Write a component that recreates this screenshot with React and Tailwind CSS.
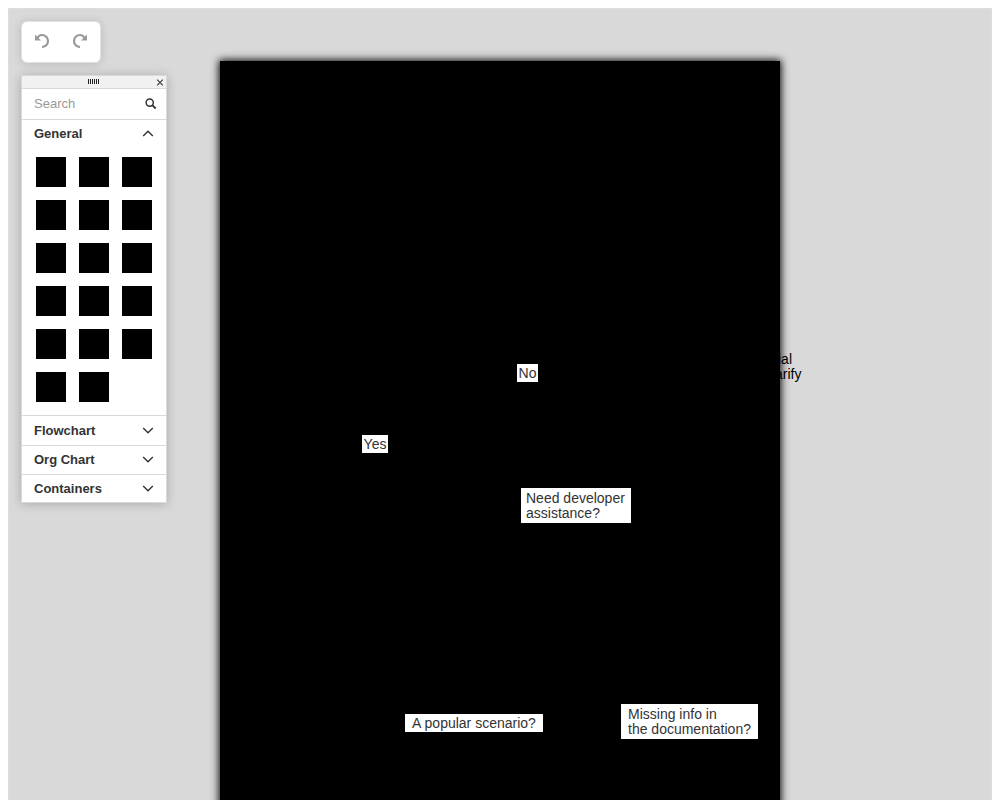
import React, { useState } from "react";

const shapes = [
  "Text", "Rectangle", "Rounded rectangle", "Ellipse", "Cross", "Triangle",
  "Diamond", "Pentagon", "Hexagon", "Octagon", "Heart", "Star",
  "Arrow up", "Arrow down", "Arrow left", "Arrow right", "Connector",
];

const labels = [
  { lines: ["No"], style: "left-[297px] top-[303px] h-[18px] w-[21px] justify-center" },
  { lines: ["Yes"], style: "left-[142px] top-[374px] h-[18px] w-[26px] justify-center" },
  { lines: ["Need developer", "assistance?"], style: "left-[301px] top-[427px] h-[35px] w-[110px] pl-[5px]" },
  { lines: ["A popular scenario?"], style: "left-[185px] top-[653px] h-[18px] w-[138px] justify-center" },
  { lines: ["Missing info in", "the documentation?"], style: "left-[401px] top-[643px] h-[35px] w-[137px] pl-[7px]" },
];

function Undo() {
  return (
    <svg className="h-4 w-4" viewBox="0 0 16 16" fill="none" aria-hidden="true">
      <path d="M3.6 4.8C4.7 3 6.2 2 8 2a6 6 0 0 1 0 12" stroke="#999" strokeWidth="2.2" />
      <path d="M1 1.6v6h6z" fill="#999" />
    </svg>
  );
}

function Chevron({ open }) {
  return (
    <svg className="h-3 w-3" viewBox="0 0 12 12" fill="none" stroke="#333" strokeWidth="1.4" aria-hidden="true">
      <path d={open ? "M1.2 8 6 3.2l4.8 4.8" : "M1.2 3 6 7.8l4.8-4.8"} />
    </svg>
  );
}

function SectionButton({ title, open, height, onClick }) {
  return (
    <button
      type="button"
      aria-expanded={open}
      onClick={onClick}
      className={`flex w-full items-center justify-between px-3 text-[13px] font-bold text-[#333] ${height}`}
    >
      <span>{title}</span>
      <Chevron open={open} />
    </button>
  );
}

function Toolbox() {
  const [open, setOpen] = useState("General");
  const toggle = (name) => setOpen(open === name ? "" : name);
  return (
    <aside className="w-[146px] divide-y divide-[#d9d9d9] border border-[#d9d9d9] bg-white shadow-[0_1px_10px_rgba(0,0,0,0.22)]">
      <div className="relative flex h-[13px] items-start justify-center bg-[#f1f1f1] pt-[3px] pr-[2px]">
        <svg className="h-[5px] w-[11px]" viewBox="0 0 11 5" fill="#222" shapeRendering="crispEdges" aria-hidden="true">
          <path d="M0 0h1v5H0zM2 0h1v5H2zM4 0h1v5H4zM6 0h1v5H6zM8 0h1v5H8zM10 0h1v5h-1z" />
        </svg>
        <button type="button" aria-label="Close toolbox" className="absolute top-[3px] right-[2px]">
          <svg className="h-[7px] w-[8px]" viewBox="0 0 8 7" stroke="#444" strokeWidth="1.3" aria-hidden="true">
            <path d="m1.2.6 5.6 5.8M6.8.6 1.2 6.4" />
          </svg>
        </button>
      </div>
      <div className="flex h-[31px] items-center pr-2 pl-3">
        <input
          type="text"
          aria-label="Search shapes"
          placeholder="Search"
          className="min-w-0 flex-1 bg-transparent text-[13px] text-[#333] outline-none placeholder:text-[#999]"
        />
        <button type="button" aria-label="Search">
          <svg className="h-[14px] w-[14px]" viewBox="0 0 14 14" fill="none" stroke="#333" aria-hidden="true">
            <circle cx="5.7" cy="5.6" r="3.6" strokeWidth="1.5" />
            <path d="m8.2 8.1 3.5 3.4" strokeWidth="1.8" />
          </svg>
        </button>
      </div>
      <section>
        <SectionButton title="General" open={open === "General"} height="h-7" onClick={() => toggle("General")} />
        {open === "General" && (
          <div className="grid grid-cols-[repeat(3,30px)] gap-[13px] px-[14px] pt-[9px] pb-[13px]">
            {shapes.map((shape) => (
              <button key={shape} type="button" aria-label={shape} className="h-[30px] bg-black" />
            ))}
          </div>
        )}
      </section>
      <section>
        <SectionButton title="Flowchart" open={open === "Flowchart"} height="h-[29px]" onClick={() => toggle("Flowchart")} />
      </section>
      <section>
        <SectionButton title="Org Chart" open={open === "Org Chart"} height="h-7" onClick={() => toggle("Org Chart")} />
      </section>
      <section>
        <SectionButton title="Containers" open={open === "Containers"} height="h-[27px]" onClick={() => toggle("Containers")} />
      </section>
    </aside>
  );
}

export default function App() {
  return (
    <div className="flex h-screen flex-col bg-white px-2 pt-2 font-['Liberation_Sans',Arial,sans-serif]">
      <main className="relative min-h-0 flex-1 overflow-hidden border-x border-t border-[#dddddd] bg-[#d9d9d9] pt-[52px]">
        <div className="relative mx-auto h-[1000px] w-[560px] bg-black text-sm leading-[15px] text-black shadow-[0_0_8px_1px_#000]">
          {labels.map(({ lines, style }) => (
            <div key={lines[0]} className={`absolute flex items-center bg-white whitespace-nowrap text-[#333] ${style}`}>
              <p>
                {lines.map((line) => (
                  <span key={line} className="block">{line}</span>
                ))}
              </p>
            </div>
          ))}
          <p className="absolute top-[291px] left-[558px]">ial</p>
          <p className="absolute top-[306px] left-[555px]">arify</p>
        </div>
        <div className="absolute top-3 left-3 flex flex-col items-start gap-3">
          <div className="flex h-[42px] w-20 items-center justify-center gap-[22px] rounded-md border border-[#e2e2e2] bg-white pb-[2px] shadow-[0_1px_8px_rgba(0,0,0,0.15)]">
            <button type="button" aria-label="Undo"><Undo /></button>
            <button type="button" aria-label="Redo" className="-scale-x-100"><Undo /></button>
          </div>
          <Toolbox />
        </div>
      </main>
    </div>
  );
}
